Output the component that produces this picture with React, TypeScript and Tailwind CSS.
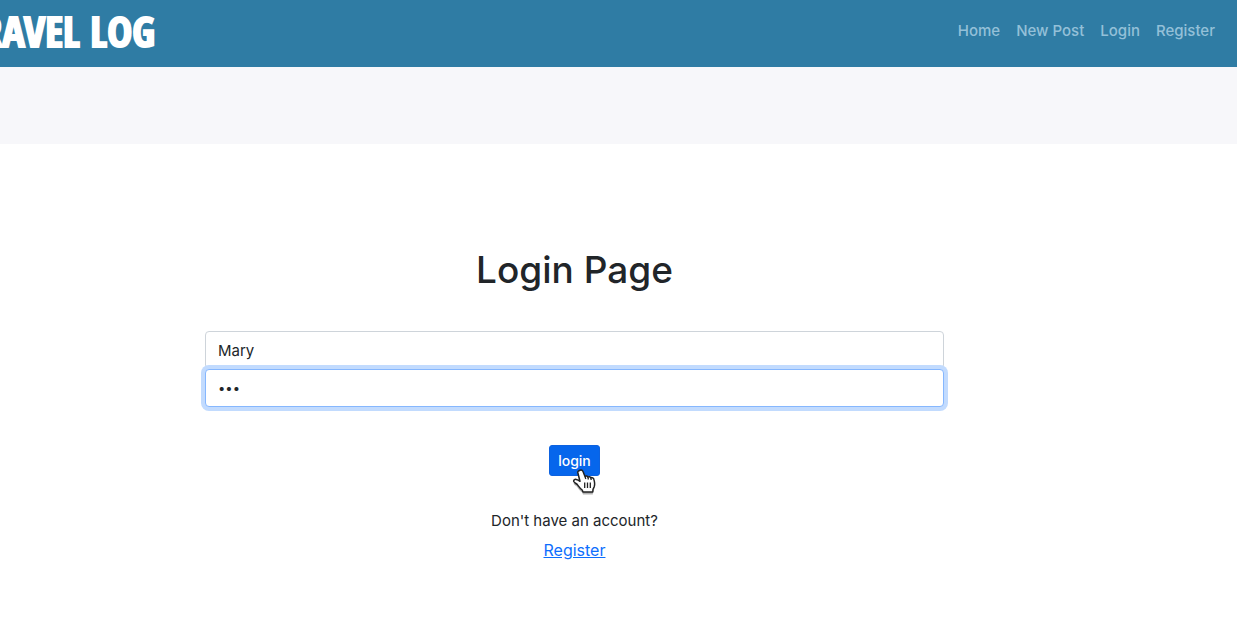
import React from "react";

const navLinks = ["Home", "New Post", "Login", "Register"];

function PointerHand() {
  return (
    <svg
      className="pointer-events-none absolute top-[24px] left-[23px] h-[27px] w-[26px]"
      viewBox="0 0 26 27"
      aria-hidden="true"
    >
      <path
        d="M8 1.200c1.300-.5 2.500.1 3 1.300l2 5c.8-.7 2.300-.5 2.900.5.900-.6 2.400-.3 2.900.8 1.200-.5 2.800.2 3.100 1.600.7 2.500 1.200 5 .3 7.400l-1.200 2.500-.2 2.700H11l-.8-2c-2.200-1.500-3.600-3.800-5-5.600-1.200-1-2.900-1.500-3.400-2.800-.5-1.400.9-2.500 2.400-2.200 1.500.3 2.700 1 3.800 1.900L5.900 4c-.6-1.300.8-2.300 2.100-2.800z"
        transform="translate(0 2.500)"
        fill="#000"
        opacity=".3"
      />
      <path
        d="M8 1.200c1.300-.5 2.500.1 3 1.300l2 5c.8-.7 2.300-.5 2.900.5.900-.6 2.400-.3 2.900.8 1.200-.5 2.800.2 3.100 1.600.7 2.500 1.200 5 .3 7.400l-1.200 2.500-.2 2.700H11l-.8-2c-2.200-1.500-3.600-3.800-5-5.600-1.200-1-2.900-1.500-3.400-2.800-.5-1.400.9-2.500 2.400-2.200 1.500.3 2.700 1 3.800 1.900L5.900 4c-.6-1.300.8-2.300 2.100-2.800z"
        fill="#fff"
        stroke="#222"
        strokeWidth="1.500"
        strokeLinejoin="round"
      />
      <path
        d="M12.700 13.500v5.500M15.500 13.500v5.500M18.300 13.500v5.500M13 7.500l.8 2.500M15.900 8l.5 2.500M18.800 8.800l.4 2.200"
        stroke="#222"
        strokeWidth="1.300"
        fill="none"
      />
    </svg>
  );
}

export default function App() {
  return (
    <div className="min-h-screen bg-white font-['Inter',sans-serif] text-[15px] text-[#212529]">
      <header className="flex h-[67px] items-start justify-between bg-[#2f7ca4] pr-[22px]">
        <a
          href="#"
          className="flex w-[155px] justify-end overflow-hidden pt-[9px] font-['Liberation_Sans_Narrow','Open_Sans_Condensed','DejaVu_Sans_Condensed',sans-serif] text-[42px] leading-[44px] font-bold whitespace-nowrap text-white [-webkit-text-stroke:2px_white]"
        >
          TRAVEL LOG
        </a>
        <nav className="flex gap-4 pt-[19px]">
          {navLinks.map((label) => (
            <a key={label} href="#" className="leading-6 font-medium text-[#94c0d8]">
              {label}
            </a>
          ))}
        </nav>
      </header>
      <div className="h-[77px] bg-[#f7f7fa]" />
      <main className="flex justify-center pt-[102px] pr-[88px]">
        <div className="flex w-full max-w-[739px] flex-col items-center">
          <h1 className="text-[37px] leading-[48px] font-medium">Login Page</h1>
          <form
            className="mt-[37px] flex w-full flex-col items-center"
            onSubmit={(e) => e.preventDefault()}
          >
            <input
              type="text"
              aria-label="Username"
              defaultValue="Mary"
              className="h-[38px] w-full rounded border border-[#ced4da] bg-white px-3 outline-none"
            />
            <input
              type="password"
              aria-label="Password"
              defaultValue="abc"
              className="relative h-[38px] w-full rounded border border-[#86b7fe] bg-white px-3 text-[13px] ring-4 ring-[#c2dbfe] outline-none"
            />
            <div className="relative mt-[38px]">
              <button
                type="submit"
                className="block h-[31px] rounded-[3px] border border-[#0d62e0] bg-[#0666ec] px-2 text-sm font-medium text-white"
              >
                login
              </button>
              <PointerHand />
            </div>
          </form>
          <p className="mt-[33px] leading-6">Don't have an account?</p>
          <a href="#" className="mt-[5px] text-base leading-6 text-[#0d6efd] underline">
            Register
          </a>
        </div>
      </main>
    </div>
  );
}
